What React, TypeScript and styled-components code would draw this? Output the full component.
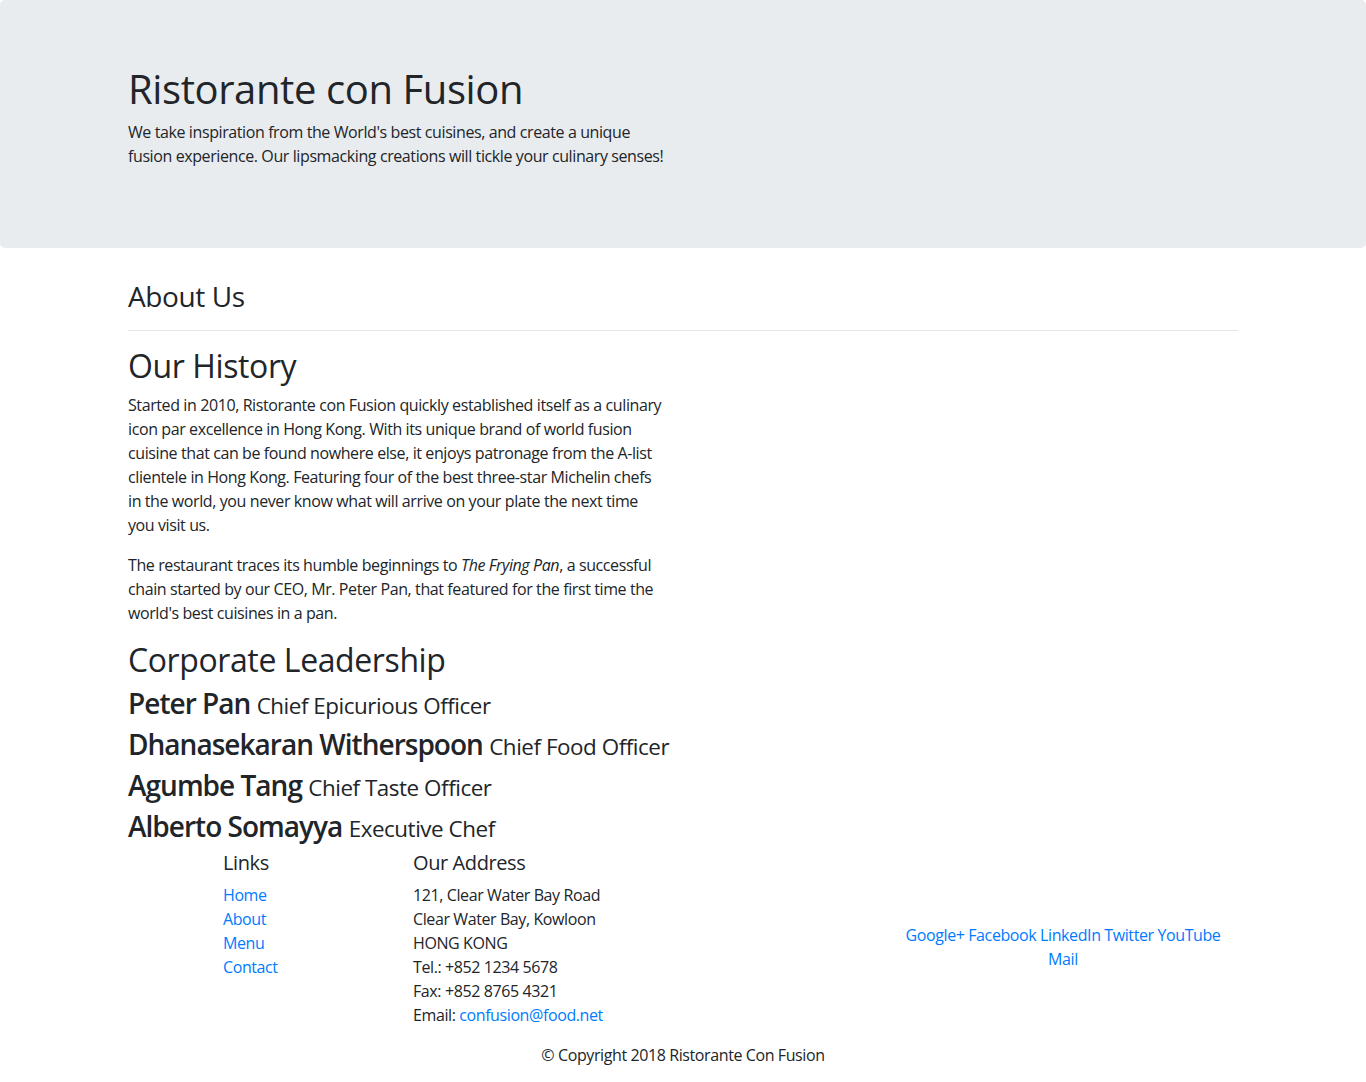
import React from 'react'
import styled, { createGlobalStyle } from 'styled-components'

const GlobalStyle = createGlobalStyle`
  *, *::before, *::after { box-sizing: border-box; }
  body {
    margin: 0;
    font-family: "Open Sans", "Noto Sans", sans-serif;
    font-size: 16px;
    line-height: 1.5;
    letter-spacing: -0.025em;
    color: #212529;
    background: #fff;
  }
  h1, h2, h3, h5 {
    margin: 0 0 8px;
    font-weight: 500;
    line-height: 1.2;
  }
  p { margin: 0 0 16px; }
  a { color: #007bff; text-decoration: none; }
`

const history = [
  'Started in 2010, Ristorante con Fusion quickly established itself as a culinary',
  'icon par excellence in Hong Kong. With its unique brand of world fusion',
  'cuisine that can be found nowhere else, it enjoys patronage from the A-list',
  'clientele in Hong Kong. Featuring four of the best three-star Michelin chefs',
  'in the world, you never know what will arrive on your plate the next time',
  'you visit us.',
]

const leaders = [
  { name: 'Peter Pan', designation: 'Chief Epicurious Officer' },
  { name: 'Dhanasekaran Witherspoon', designation: 'Chief Food Officer' },
  { name: 'Agumbe Tang', designation: 'Chief Taste Officer' },
  { name: 'Alberto Somayya', designation: 'Executive Chef' },
]

const links = ['Home', 'About', 'Menu', 'Contact']
const socials = ['Google+', 'Facebook', 'LinkedIn', 'Twitter', 'YouTube']

const App: React.FC = () => {
  return (
    <>
      <GlobalStyle />
      <Jumbotron>
        <Container>
          <Row>
            <HalfCol>
              <Title>Ristorante con Fusion</Title>
              <p>
                We take inspiration from the World's best cuisines, and create a unique fusion experience. Our
                lipsmacking creations will tickle your culinary senses!
              </p>
            </HalfCol>
          </Row>
        </Container>
      </Jumbotron>

      <Container>
        <Row>
          <FullCol>
            <PageTitle>About Us</PageTitle>
            <Divider />
          </FullCol>
        </Row>
        <Row>
          <HalfCol>
            <SectionTitle>Our History</SectionTitle>
            <p>
              {history.map((line, i) => (
                <React.Fragment key={i}>
                  {i > 0 && <br />}
                  {line}
                </React.Fragment>
              ))}
            </p>
            <p>
              The restaurant traces its humble beginnings to <em>The Frying Pan</em>, a successful
              <br />
              chain started by our CEO, Mr. Peter Pan, that featured for the first time the
              <br />
              world's best cuisines in a pan.
            </p>
          </HalfCol>
        </Row>
        <Row>
          <FullCol>
            <SectionTitle>Corporate Leadership</SectionTitle>
            {leaders.map(l => (
              <Leader key={l.name}>
                <LeaderName>{l.name}</LeaderName> <small>{l.designation}</small>
              </Leader>
            ))}
          </FullCol>
        </Row>
      </Container>

      <Footer>
        <Container>
          <Row>
            <FooterCol span={2} offset={1}>
              <FooterTitle>Links</FooterTitle>
              <LinkList>
                {links.map(l => (
                  <li key={l}>
                    <a href="#">{l}</a>
                  </li>
                ))}
              </LinkList>
            </FooterCol>
            <FooterCol span={5}>
              <FooterTitle>Our Address</FooterTitle>
              <Address>
                121, Clear Water Bay Road
                <br />
                Clear Water Bay, Kowloon
                <br />
                HONG KONG
                <br />
                Tel.: +852 1234 5678
                <br />
                Fax: +852 8765 4321
                <br />
                Email: <a href="#">confusion@food.net</a>
              </Address>
            </FooterCol>
            <SocialCol span={4}>
              <div>
                {socials.map((s, i) => (
                  <React.Fragment key={s}>
                    {i > 0 && ' '}
                    <a href="#">{s}</a>
                  </React.Fragment>
                ))}
              </div>
              <div>
                <a href="#">Mail</a>
              </div>
            </SocialCol>
          </Row>
          <CenterRow>
            <p>© Copyright 2018 Ristorante Con Fusion</p>
          </CenterRow>
        </Container>
      </Footer>
    </>
  )
}

const Container = styled.div`
  width: 100%;
  max-width: 1140px;
  margin: 0 auto;
  padding: 0 15px;
`

const Row = styled.div`
  display: flex;
  flex-wrap: wrap;
  margin: 0 -15px;
`

const FullCol = styled.div`
  flex: 0 0 100%;
  max-width: 100%;
  padding: 0 15px;
`

const HalfCol = styled.div`
  flex: 0 0 50%;
  max-width: 50%;
  padding: 0 15px;
`

const Jumbotron = styled.header`
  background-color: #e9ecef;
  border-radius: 4.8px;
  padding: 64px 32px;
  margin-bottom: 32px;
`

const Title = styled.h1`
  font-size: 40px;
  padding-top: 1px;
  && { margin-bottom: 7px; }
`

const PageTitle = styled.h3`
  font-size: 28px;
`

const Divider = styled.hr`
  margin: 16px 0;
  border: 0;
  border-top: 1px solid rgba(0, 0, 0, 0.1);
  height: 0;
`

const SectionTitle = styled.h2`
  font-size: 32px;
`

const Leader = styled.h3`
  font-size: 28px;
  line-height: 33px;
  letter-spacing: -0.035em;

  small {
    font-size: 22.4px;
    font-weight: 400;
    line-height: 1;
    letter-spacing: -0.02em;
  }
`

const LeaderName = styled.b`
  font-weight: 600;
`

const Footer = styled.footer`
  padding: 0;
`

const FooterCol = styled.div<{ span: number; offset?: number }>`
  flex: 0 0 ${({ span }) => (span / 12) * 100}%;
  max-width: ${({ span }) => (span / 12) * 100}%;
  margin-left: ${({ offset = 0 }) => (offset / 12) * 100}%;
  padding: 0 15px;
`

const SocialCol = styled(FooterCol)`
  align-self: center;
  text-align: center;
`

const FooterTitle = styled.h5`
  font-size: 20px;
`

const LinkList = styled.ul`
  list-style: none;
  margin: 0 0 16px;
  padding: 0;
`

const Address = styled.address`
  font-style: normal;
  margin-bottom: 16px;
`

const CenterRow = styled(Row)`
  justify-content: center;

  p {
    padding: 0 15px;
  }
`

export default App
